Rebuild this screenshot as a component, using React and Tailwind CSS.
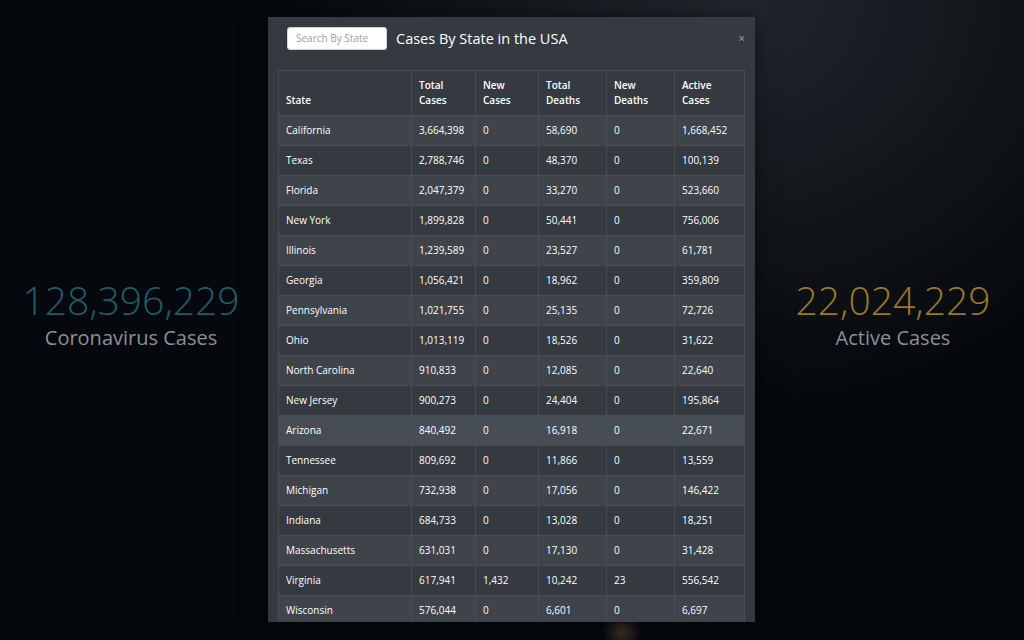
import React, { useState } from "react";

const ROWS = [
  ["California", "3,664,398", "0", "58,690", "0", "1,668,452"],
  ["Texas", "2,788,746", "0", "48,370", "0", "100,139"],
  ["Florida", "2,047,379", "0", "33,270", "0", "523,660"],
  ["New York", "1,899,828", "0", "50,441", "0", "756,006"],
  ["Illinois", "1,239,589", "0", "23,527", "0", "61,781"],
  ["Georgia", "1,056,421", "0", "18,962", "0", "359,809"],
  ["Pennsylvania", "1,021,755", "0", "25,135", "0", "72,726"],
  ["Ohio", "1,013,119", "0", "18,526", "0", "31,622"],
  ["North Carolina", "910,833", "0", "12,085", "0", "22,640"],
  ["New Jersey", "900,273", "0", "24,404", "0", "195,864"],
  ["Arizona", "840,492", "0", "16,918", "0", "22,671"],
  ["Tennessee", "809,692", "0", "11,866", "0", "13,559"],
  ["Michigan", "732,938", "0", "17,056", "0", "146,422"],
  ["Indiana", "684,733", "0", "13,028", "0", "18,251"],
  ["Massachusetts", "631,031", "0", "17,130", "0", "31,428"],
  ["Virginia", "617,941", "1,432", "10,242", "23", "556,542"],
  ["Wisconsin", "576,044", "0", "6,601", "0", "6,697"],
];

const HEADS = [
  ["State", "w-[133px]"],
  ["Total Cases", "w-[64px]"],
  ["New Cases", "w-[63px]"],
  ["Total Deaths", "w-[68px]"],
  ["New Deaths", "w-[68px]"],
  ["Active Cases", "w-[70px]"],
];

function Stat({ value, label, color }) {
  return (
    <div className="flex w-[262px] flex-col items-center">
      <div className={`text-[39px] font-light leading-[48px] ${color}`}>{value}</div>
      <div className="mt-[1px] text-[20px] leading-[26px] text-[#8b9095]">{label}</div>
    </div>
  );
}

export default function App() {
  const [query, setQuery] = useState("");
  const rows = ROWS.filter((r) => r[0].toLowerCase().includes(query.toLowerCase()));

  return (
    <main
      className="flex h-[640px] w-[1024px] items-center overflow-hidden bg-[#05080c] bg-[radial-gradient(ellipse_at_72%_0%,rgba(70,76,84,0.45),transparent_45%)] text-white"
      style={{ fontFamily: '"Open Sans", "Noto Sans", sans-serif' }}
    >
      <div className="pb-[14px]">
        <Stat value="128,396,229" label="Coronavirus Cases" color="text-[#1f5c69]" />
      </div>

      <div className="relative flex w-[500px] justify-center pr-[1px]">
        <div className="absolute bottom-[-30px] left-[340px] h-[40px] w-[40px] rounded-full bg-[radial-gradient(circle,rgba(120,95,70,0.45),transparent_70%)]" />
        <div className="relative mt-[-2px] flex h-[605px] w-[487px] flex-col overflow-hidden bg-[#343a40] shadow-[0_0_20px_rgba(0,0,0,0.5)]">
          <div className="flex items-start justify-between pl-[19px] pr-[10px] pt-[10px]">
            <div className="flex items-center gap-[9px]">
              <input
                value={query}
                onChange={(e) => setQuery(e.target.value)}
                placeholder="Search By State"
                className="h-[23px] w-[100px] rounded-[3px] border border-[#ced4da] bg-white px-[8px] text-[10px] text-[#495057] outline-none placeholder:text-[#9aa0a6]"
              />
              <h2 className="text-[14.5px] leading-[23px] text-white">Cases By State in the USA</h2>
            </div>
            <button type="button" className="mt-[6px] text-[12px] leading-[12px] text-[#9ca3ab]">
              ×
            </button>
          </div>

          <div className="mt-[20px] px-[10px]">
            <table className="w-[466px] table-fixed border-collapse text-[10px] text-white">
              <thead>
                <tr className="h-[45px] bg-[#343a40]">
                  {HEADS.map(([h, w]) => (
                    <th
                      key={h}
                      className={`${w} border border-[#454d55] px-[7px] pb-[7px] align-bottom text-left font-semibold leading-[15px]`}
                    >
                      {h.split(" ").map((p) => (
                        <div key={p}>{p}</div>
                      ))}
                    </th>
                  ))}
                </tr>
              </thead>
              <tbody>
                {rows.map((r, i) => (
                  <tr
                    key={r[0]}
                    className={`h-[30px] ${
                      r[0] === "Arizona" ? "bg-[#474d54]" : i % 2 === 0 ? "bg-[#3e444a]" : "bg-[#343a40]"
                    }`}
                  >
                    {r.map((c, j) => (
                      <td key={j} className="border border-[#454d55] px-[7px] leading-[16px]">
                        {c}
                      </td>
                    ))}
                  </tr>
                ))}
              </tbody>
            </table>
          </div>
        </div>
      </div>

      <div className="pb-[14px]">
        <Stat value="22,024,229" label="Active Cases" color="text-[#9a7a25]" />
      </div>
    </main>
  );
}
